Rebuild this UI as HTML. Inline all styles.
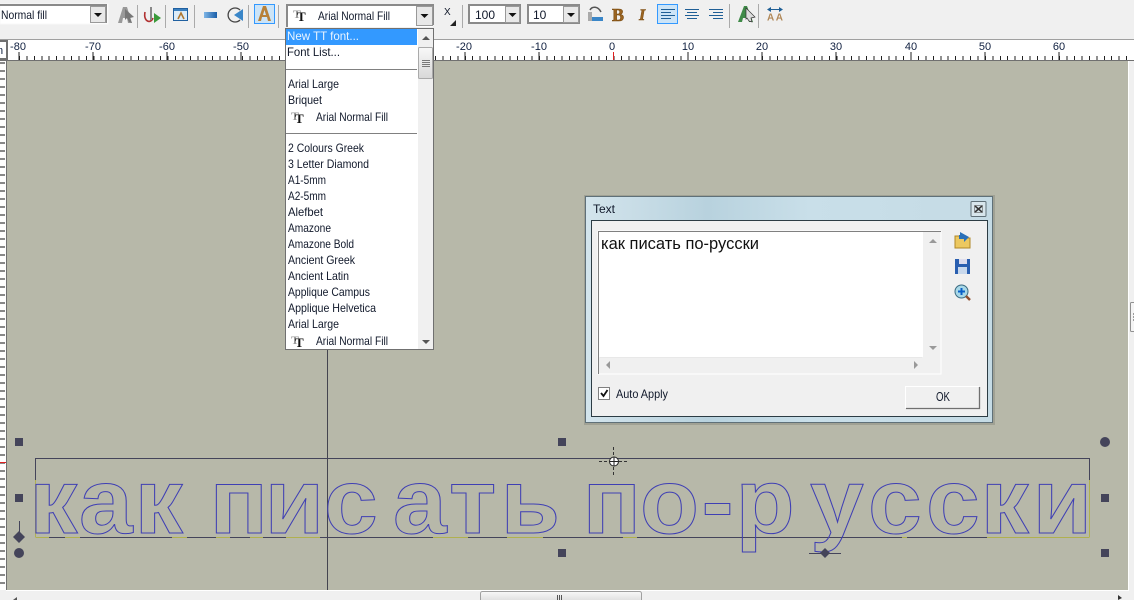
<!DOCTYPE html>
<html><head><meta charset="utf-8"><title>Text</title>
<style>
html,body{margin:0;padding:0;background:#f0f0f0;width:1134px;height:600px;overflow:hidden}
svg{display:block;position:absolute;left:0;top:0}
text{font-family:"Liberation Sans",sans-serif;font-size:12px;fill:#10182a}
.r{font-size:11px;text-anchor:middle;fill:#102040}
.big{font-family:"Liberation Sans",sans-serif;font-weight:bold;font-size:92px;fill:none;stroke:#3f3fb4;stroke-width:1}
</style></head><body>
<svg width="1134" height="600" viewBox="0 0 1134 600" xmlns="http://www.w3.org/2000/svg">
<defs>
<linearGradient id="tb" x1="0" x2="1" y1="0" y2="0"><stop offset="0" stop-color="#d3e4ec"/><stop offset=".3" stop-color="#b8d2de"/><stop offset=".55" stop-color="#c9dfe9"/><stop offset="1" stop-color="#c5dbe5"/></linearGradient>
<linearGradient id="bl" x1="0" x2="1" y1="0" y2="0"><stop offset="0" stop-color="#7fb6e6"/><stop offset="1" stop-color="#1a5ea8"/></linearGradient>
<linearGradient id="th" x1="0" x2="0" y1="0" y2="1"><stop offset="0" stop-color="#f8f8f8"/><stop offset="1" stop-color="#d8d8d8"/></linearGradient>
<g id="tt"><text x="0" y="9" style="font-family:'Liberation Serif',serif;font-size:12px;font-weight:bold;fill:#999">T</text><text x="4" y="12" style="font-family:'Liberation Serif',serif;font-size:13px;font-weight:bold;fill:#111">T</text></g>
<path id="dn" d="M-4 0h8l-4 4z" fill="#111"/>
</defs>

<rect width="1134" height="39" fill="#f0f0f0"/>
<rect y="39" width="1134" height="1" fill="#a0a0a0"/>
<rect y="40" width="1134" height="20" fill="#fff"/>
<rect y="60" width="1134" height="1" fill="#707070"/>
<line x1="19" x2="1130" y1="58" y2="58" stroke="#222" stroke-width="4" stroke-dasharray="1 6.43" shape-rendering="crispEdges"/>
<path d="M19 52v8M93 52v8M167 52v8M241 52v8M465 52v8M539 52v8M688 52v8M762 52v8M836 52v8M911 52v8M985 52v8M1059 52v8" stroke="#222" shape-rendering="crispEdges"/>
<rect x="613" y="52" width="1" height="8" fill="#e02020"/>
<g>
<text class="r" x="18" y="50">-80</text><text class="r" x="93" y="50">-70</text><text class="r" x="167" y="50">-60</text><text class="r" x="241" y="50">-50</text><text class="r" x="464" y="50">-20</text><text class="r" x="539" y="50">-10</text><text class="r" x="612" y="50">0</text><text class="r" x="688" y="50">10</text><text class="r" x="762" y="50">20</text><text class="r" x="836" y="50">30</text><text class="r" x="911" y="50">40</text><text class="r" x="985" y="50">50</text><text class="r" x="1059" y="50">60</text>
</g>
<rect x="-3" y="41" width="10" height="18" fill="#fff" stroke="#707070" stroke-width="2"/>
<text x="-3" y="54" style="fill:#102040;font-size:11px">n</text>
<rect y="61" width="6" height="529" fill="#fff"/>
<line x1="2.500" x2="2.500" y1="62.300" y2="590" stroke="#111" stroke-width="5" stroke-dasharray="1 7" shape-rendering="crispEdges"/>
<rect x="0" y="462" width="6" height="1" fill="#e02020"/>
<rect x="6" y="61" width="1122" height="529" fill="#b7b8a9"/>
<rect x="6" y="60" width="1122" height="1" fill="#707070"/>
<rect x="6" y="60" width="1" height="530" fill="#707070"/>
<rect x="6" y="590" width="1128" height="1" fill="#fff"/>
<rect x="1128" y="61" width="1" height="530" fill="#fff"/>
<rect x="0" y="591" width="1134" height="9" fill="#f0f0f0"/>
<rect x="1129" y="61" width="5" height="530" fill="#f0f0f0"/>
<rect x="480.500" y="591.500" width="161" height="12" rx="2" fill="url(#th)" stroke="#a0a0a0"/>
<path d="M557.500 595v5M559.500 595v5M561.500 595v5" stroke="#555"/>
<path d="M17 597l-4 3h4z" fill="#555"/>
<path d="M1118 595l4 3-4 2z" fill="#333"/>
<rect x="1130.500" y="302.500" width="8" height="29" rx="1" fill="#f4f4f4" stroke="#909090"/>
<path d="M1133 314h2M1133 317h2M1133 320h2" stroke="#444"/>

<rect x="327" y="61" width="1" height="529" fill="#44444f"/>
<path d="M35.500 480V458.500H1089.500V480" fill="none" stroke="#44445a"/>
<path d="M36 537.500H1089" stroke="#44445a"/>
<path d="M35.500 480V537.500M1089.500 480V537.500M36 537.500h13M65 537.500h15M172 537.500h15M216 537.500h14M250 537.500h13M286 537.500h34M433 537.500h35M507 537.500h36M623 537.500h14M902 537.500h5M987 537.500h102" stroke="#b0b050" fill="none"/>
<text class="big" transform="scale(1.05 1)" y="533" x="27.900 75.200 128.200 181 199.600 252 308.600 374.300 427.600 476.800 543 554.900 609.500 668.100 700.600 771.400 826.700 881.900 933.900 983.400">как писать по-русски</text>
<g fill="#44445a" shape-rendering="crispEdges">
<rect x="15" y="438" width="8" height="8"/><rect x="558" y="438" width="8" height="8"/>
<rect x="15" y="494" width="8" height="8"/><rect x="1101" y="494" width="8" height="8"/>
<rect x="558" y="549" width="8" height="8"/><rect x="1101" y="549" width="8" height="8"/>
<rect x="19" y="521" width="1" height="16"/>
<rect x="809" y="553" width="32" height="1"/>
</g>
<circle cx="19" cy="553" r="5" fill="#44445a"/><circle cx="1105" cy="442" r="5" fill="#44445a"/>
<path d="M19 531l6 6-6 6-6-6z" fill="#44445a"/><path d="M825 548l5 5-5 5-5-5z" fill="#44445a"/>
<path d="M599 461.500h10M619 461.500h10M613.500 447v10M613.500 467v9" stroke="#333" stroke-dasharray="3 2"/>
<circle cx="614" cy="461.500" r="4.500" fill="#fff" stroke="#222"/>
<path d="M610 461.500h8M614 457.500v8" stroke="#222"/>

<rect x="0" y="4" width="108" height="20" fill="#fff" stroke="#f8f8f8"/>
<path d="M0 5H106V23" fill="none" stroke="#8a8a8a" stroke-width="2"/>
<rect x="90.500" y="6.500" width="15" height="16" fill="#e8e8e8" stroke="#999"/>
<use href="#dn" x="98" y="13"/>
<text x="1" y="19" textLength="46" lengthAdjust="spacingAndGlyphs">Normal fill</text>

<path d="M118 23l5-16h4l5 16h-4l-1-5h-4l-1 5z" fill="#999"/><path d="M125 9l9 8-4 1 2 5-3-1-2-4-2 2z" fill="#777"/>
<rect x="137" y="5" width="1" height="23" fill="#aaa"/>
<path d="M145 12c-2 10 6 12 8 6" fill="none" stroke="#b03030" stroke-width="1.600"/><rect x="150" y="7" width="2" height="13" fill="#888"/><path d="M154 13l7 5-7 5z" fill="#3a9a3a"/>
<rect x="165" y="5" width="1" height="23" fill="#aaa"/>
<rect x="173.500" y="8.500" width="14" height="12" fill="#dcecf8" stroke="#2060a0"/><rect x="174" y="9" width="13" height="2" fill="#3a80c0"/><path d="M178 19l3-6 3 6" fill="none" stroke="#b07830" stroke-width="1.600"/>
<rect x="194" y="5" width="1" height="23" fill="#aaa"/>
<rect x="204" y="12" width="13" height="6" fill="url(#bl)"/>
<path d="M240 10a7 7 0 1 0 0 10" fill="none" stroke="#444" stroke-width="1.300"/><path d="M243 9v12l-9-6z" fill="#3a86c8"/>
<rect x="248" y="5" width="1" height="23" fill="#aaa"/>
<rect x="254.500" y="4.500" width="20" height="19" fill="#cce4f7" stroke="#3399ff"/>
<path d="M258 21l5-15h3l5 15h-3l-1-4h-5l-1 4z" fill="#b88138"/><path d="M264.500 10l-1.500 5h3z" fill="#cce4f7"/>
<rect x="278" y="5" width="1" height="23" fill="#aaa"/>

<rect x="286" y="4" width="147" height="23" fill="#fff"/>
<path d="M287 27V5H433V25" fill="none" stroke="#8a8a8a" stroke-width="2"/>
<rect x="416.500" y="6.500" width="16" height="19" fill="#e8e8e8" stroke="#999"/>
<use href="#dn" x="424.500" y="14"/>
<use href="#tt" x="293" y="9"/>
<text x="318" y="20" textLength="72" lengthAdjust="spacingAndGlyphs">Arial Normal Fill</text>
<text x="444" y="15" style="font-size:10px">X</text><path d="M456 20v6h-6z" fill="#222"/>
<rect x="462" y="5" width="1" height="23" fill="#aaa"/>
<rect x="469" y="5" width="51" height="18" fill="#fff" stroke="#8a8a8a" stroke-width="2"/>
<rect x="505.500" y="6.500" width="14" height="16" fill="#e8e8e8" stroke="#999"/><use href="#dn" x="512.500" y="13"/>
<text x="475" y="19" style="font-size:12px">100</text>
<rect x="528" y="5" width="51" height="18" fill="#fff" stroke="#8a8a8a" stroke-width="2"/>
<rect x="563.500" y="6.500" width="15" height="16" fill="#e8e8e8" stroke="#999"/><use href="#dn" x="571" y="13"/>
<text x="533" y="19" style="font-size:12px">10</text>
<rect x="588" y="12" width="4" height="9" fill="#aaa"/><rect x="592" y="17" width="11" height="4" fill="#3a86c8"/><path d="M590 10c2-4 8-4 11 2" fill="none" stroke="#555" stroke-width="1.500"/>
<text x="612" y="21" style="font-family:'Liberation Serif',serif;font-weight:bold;font-size:18px;fill:#9a6420;stroke:#7a4a10;stroke-width:.6">B</text>
<text x="639" y="20" style="font-family:'Liberation Serif',serif;font-weight:bold;font-style:italic;font-size:16px;fill:#9a6420;stroke:#7a4a10;stroke-width:.5">I</text>
<rect x="657.500" y="4.500" width="20" height="19" fill="#cce4f7" stroke="#3399ff"/>
<path d="M661 9.500h14M661 12.500h10M661 15.500h14M661 18.500h10" stroke="#1f5f96"/>
<path d="M685 9.500h14M687 12.500h10M685 15.500h14M687 18.500h10" stroke="#1f5f96"/>
<path d="M709 9.500h14M713 12.500h10M709 15.500h14M713 18.500h10" stroke="#1f5f96"/>
<rect x="729" y="4" width="1" height="24" fill="#aaa"/>
<path d="M738 22l6-16h3l6 16h-4l-1-4h-5l-1 4z" fill="#3f8a48"/><path d="M746 8l9 9-4 1 1 4-3-1-2-3-1 1z" fill="#ddd" stroke="#333" stroke-width=".7"/>
<rect x="758" y="4" width="1" height="24" fill="#aaa"/>
<path d="M769 9.500h12" stroke="#1f5f96"/><path d="M771 7v5l-4-2.500zM779 7v5l4-2.500z" fill="#1f5f96"/>
<text x="767" y="20.500" style="font-size:10px;fill:#b08858;font-weight:bold" textLength="16">AA</text>

<rect x="285.500" y="28.500" width="148" height="321" fill="#fff" stroke="#707070"/>
<rect x="286" y="29" width="131" height="16" fill="#3399ff"/>
<rect x="418" y="29" width="15" height="320" fill="#f0f0f0"/>
<path d="M422 40h8l-4-4z M422 340h8l-4 4z" fill="#555"/>
<rect x="418.500" y="47.500" width="14" height="31" rx="1" fill="url(#th)" stroke="#aaa"/>
<path d="M422 60.500h8M422 62.500h8M422 64.500h8M422 66.500h8" stroke="#777"/>
<rect x="286" y="69" width="131" height="1" fill="#808080"/><rect x="286" y="133" width="131" height="1" fill="#808080"/>
<g>
<text x="287" y="40" textLength="72" lengthAdjust="spacingAndGlyphs" style="fill:#eaf4ff">New TT font...</text>
<text x="287" y="56" textLength="53" lengthAdjust="spacingAndGlyphs">Font List...</text>
<text x="288" y="88" textLength="51" lengthAdjust="spacingAndGlyphs">Arial Large</text>
<text x="288" y="104" textLength="34" lengthAdjust="spacingAndGlyphs">Briquet</text>
<use href="#tt" x="291" y="111"/><text x="316" y="121" textLength="72" lengthAdjust="spacingAndGlyphs">Arial Normal Fill</text>
<text x="288" y="152" textLength="76" lengthAdjust="spacingAndGlyphs">2 Colours Greek</text>
<text x="288" y="168" textLength="81" lengthAdjust="spacingAndGlyphs">3 Letter Diamond</text>
<text x="288" y="184" textLength="38" lengthAdjust="spacingAndGlyphs">A1-5mm</text>
<text x="288" y="200" textLength="38" lengthAdjust="spacingAndGlyphs">A2-5mm</text>
<text x="288" y="216" textLength="35" lengthAdjust="spacingAndGlyphs">Alefbet</text>
<text x="288" y="232" textLength="43" lengthAdjust="spacingAndGlyphs">Amazone</text>
<text x="288" y="248" textLength="66" lengthAdjust="spacingAndGlyphs">Amazone Bold</text>
<text x="288" y="264" textLength="67" lengthAdjust="spacingAndGlyphs">Ancient Greek</text>
<text x="288" y="280" textLength="61" lengthAdjust="spacingAndGlyphs">Ancient Latin</text>
<text x="288" y="296" textLength="82" lengthAdjust="spacingAndGlyphs">Applique Campus</text>
<text x="288" y="312" textLength="88" lengthAdjust="spacingAndGlyphs">Applique Helvetica</text>
<text x="288" y="328" textLength="51" lengthAdjust="spacingAndGlyphs">Arial Large</text>
<use href="#tt" x="291" y="335"/><text x="316" y="345" textLength="72" lengthAdjust="spacingAndGlyphs">Arial Normal Fill</text>
</g>

<rect x="584" y="195" width="411" height="230" fill="#000" fill-opacity=".12"/>
<rect x="585.500" y="196.500" width="407" height="226" fill="url(#tb)" stroke="#5f7078"/>
<rect x="591.500" y="220.500" width="396" height="196" fill="#f0f0f0" stroke="#2c3c44"/>
<text x="593" y="213" style="font-size:12px">Text</text>
<rect x="971" y="201.500" width="15" height="15" rx="1" fill="#d8e6ec" stroke="#607078"/>
<path d="M975 206l7 6M982 206l-7 6" stroke="#333" stroke-width="1.500"/><rect x="974.500" y="205.500" width="8" height="7" fill="none" stroke="#555" stroke-width=".6"/>
<rect x="598" y="231" width="343" height="143" fill="#f0f0f0" stroke="#fff"/>
<rect x="599" y="232" width="324" height="125" fill="#fff"/>
<path d="M598.500 374V231.500H941" fill="none" stroke="#808080"/>
<rect x="600" y="357" width="322" height="1" fill="#e8e8e8"/>
<path d="M929 243h8l-4-4z M929 346h8l-4 4z" fill="#999"/>
<path d="M610 361v8l-4-4z M914 361v8l4-4z" fill="#999"/>
<text x="601" y="249" style="font-size:17px;fill:#111" textLength="158" lengthAdjust="spacingAndGlyphs">как писать по-русски</text>
<path d="M955 236h6l2 2h7v10h-15z" fill="#ecc860" stroke="#b08828"/><path d="M960 232l9 5-5 5v-3h-5v-4h1z" fill="#2a70b8"/>
<rect x="955" y="259" width="15" height="15" fill="#2a5fb0"/><rect x="959" y="259" width="8" height="5" fill="#dde"/><rect x="958" y="267" width="9" height="7" fill="#c8d8ec"/>
<circle cx="961.500" cy="291.500" r="6.500" fill="#a8d8e8" stroke="#3a6a80"/><path d="M958 291.500h7M961.500 288v7" stroke="#0a60c8" stroke-width="2"/><path d="M966 296l4 4" stroke="#905030" stroke-width="2.500"/>
<rect x="598.500" y="387.500" width="11" height="12" fill="#fff" stroke="#808080"/>
<path d="M601 393l2.500 3 4-6" fill="none" stroke="#111" stroke-width="1.800"/>
<text x="616" y="398" textLength="52" lengthAdjust="spacingAndGlyphs">Auto Apply</text>
<rect x="905.500" y="386.500" width="74" height="22" fill="#f0f0f0"/>
<path d="M905.500 408V386.500H979" fill="none" stroke="#fff"/><path d="M906 408.500H979.500V387" fill="none" stroke="#707070" stroke-width="1.300"/>
<text x="936" y="401" style="font-size:13px" textLength="14" lengthAdjust="spacingAndGlyphs">OK</text>
</svg>
</body></html>
